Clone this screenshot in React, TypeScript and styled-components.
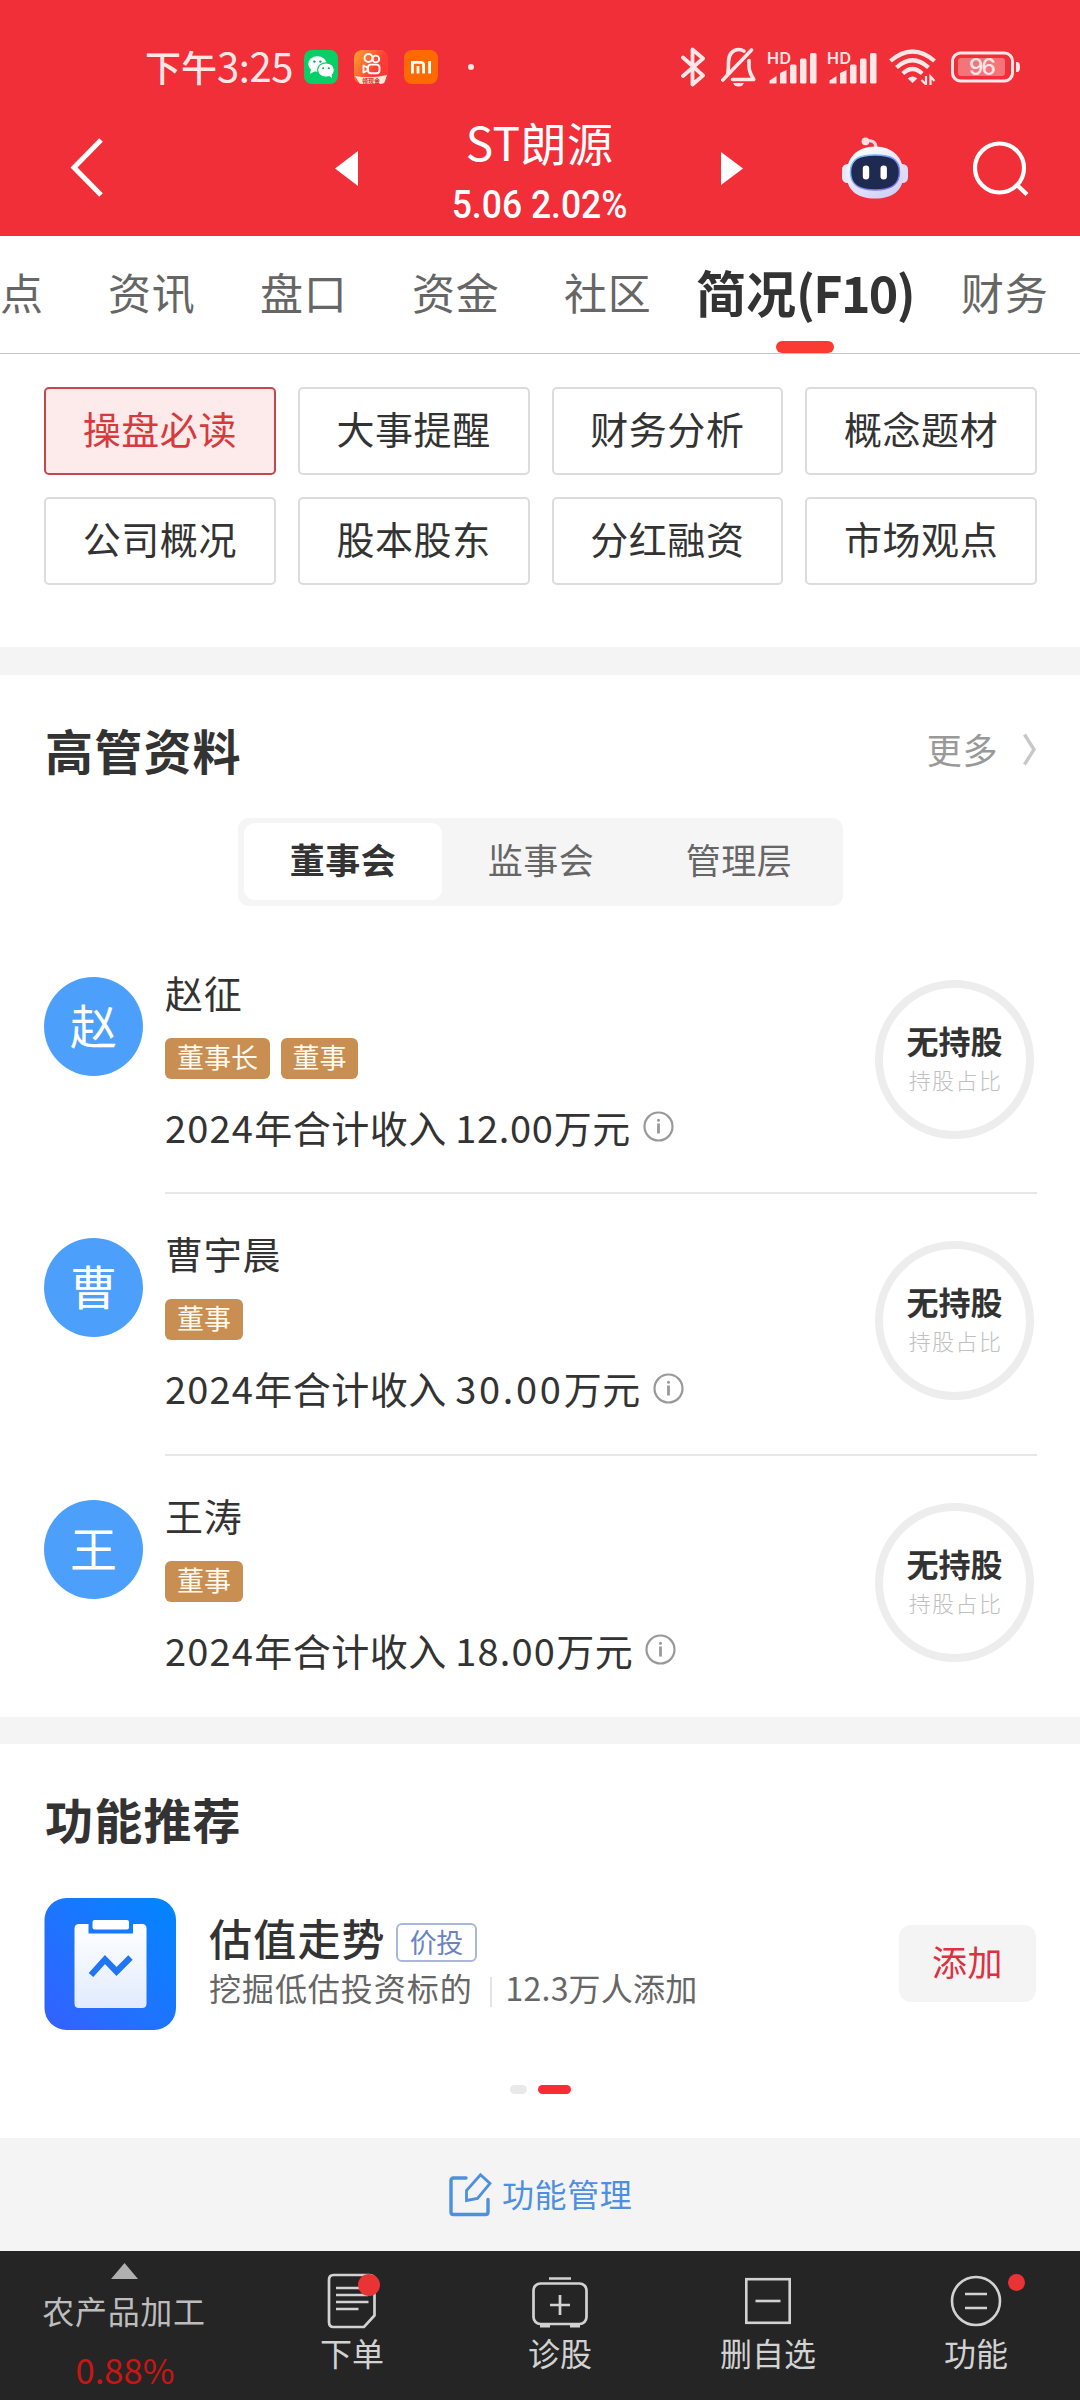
import React from 'react';
import styled, { createGlobalStyle } from 'styled-components';

const GlobalStyle = createGlobalStyle`
  * { box-sizing: border-box; }
  body {
    margin: 0;
    background: #fff;
    font-family: "Noto Sans CJK SC", "Noto Sans", sans-serif;
    color: #333;
  }
  svg { display: block; flex: none; }
`;

const Page = styled.div`
  width: 1080px;
  height: 2400px;
  display: flex;
  flex-direction: column;
  overflow: hidden;
  white-space: nowrap;
  background: #fff;
`;

/* ---------- header ---------- */

const Header = styled.header`
  height: 236px;
  flex: none;
  background: #f12f38;
  color: #fff;
`;

const StatusBar = styled.div`
  height: 100px;
  padding: 34px 59px 0 145px;
  display: flex;
  align-items: center;
`;

const Clock = styled.div`
  width: 159px;
  display: flex;
  align-items: baseline;
  font-size: 36px;
  line-height: 50px;
  font-weight: 500;
  color: #ffe6e7;
  padding-bottom: 3px;
`;

const ClockDigits = styled.span`
  font-size: 40px;
  font-weight: 400;
  letter-spacing: -0.4px;
`;

const AppIcons = styled.div`
  display: flex;
  gap: 16px;
`;

const MoreDot = styled.i`
  width: 6px;
  height: 6px;
  margin-left: 30px;
  border-radius: 50%;
  background: #ffe6e7;
`;

const SystemIcons = styled.div`
  margin-left: auto;
  display: flex;
  align-items: center;
`;

const Spacer = styled.i<{ $w: number }>`
  flex: none;
  width: ${(p) => p.$w}px;
`;

const NavBar = styled.div`
  height: 136px;
  padding: 0 51px 0 70px;
  display: flex;
  align-items: center;
`;

const StockTitle = styled.div`
  flex: 1;
  height: 136px;
  padding-top: 11px;
  display: flex;
  flex-direction: column;
  align-items: center;
`;

const StockName = styled.div`
  font-size: 46px;
  line-height: 60px;
  letter-spacing: 0.4px;
`;

const StockPrice = styled.div`
  margin-top: 14px;
  font-family: Roboto, sans-serif;
  font-size: 39px;
  line-height: 40px;
  font-weight: 500;
  transform: scaleX(0.91);
`;

/* ---------- tabs ---------- */

const Tabs = styled.nav`
  height: 118px;
  flex: none;
  display: flex;
  gap: 64px;
  border-bottom: 1px solid #c4c4c4;
`;

const Tab = styled.div<{ $w: number }>`
  flex: none;
  width: ${(p) => p.$w}px;
  display: flex;
  align-items: center;
  padding-bottom: 8px;
  font-size: 43px;
  letter-spacing: 0.8px;
  color: #666;
`;

const ActiveTab = styled(Tab)`
  position: relative;
  justify-content: center;
  margin-right: 3px;
  font-size: 50px;
  font-weight: 700;
  letter-spacing: 0;
  color: #333;
  &::after {
    content: '';
    position: absolute;
    left: 60px;
    bottom: 0;
    width: 58px;
    height: 12px;
    border-radius: 6px;
    background: #fb3b31;
  }
`;

const TabLatin = styled.span`
  letter-spacing: -1.6px;
`;

/* ---------- section shortcuts ---------- */

const Shortcuts = styled.section`
  flex: none;
  height: 293px;
  padding: 33px 43px 0 44px;
  display: grid;
  grid-template-columns: repeat(4, 1fr);
  grid-auto-rows: 88px;
  gap: 22px;
`;

const Shortcut = styled.button<{ $on?: boolean }>`
  padding: 0 0 6px;
  border: 2px solid ${(p) => (p.$on ? '#c4474b' : '#dcdcdc')};
  border-radius: 5px;
  background: ${(p) => (p.$on ? '#fdeaeb' : '#fff')};
  color: ${(p) => (p.$on ? '#d63a3c' : '#333')};
  font: 400 38px/50px "Noto Sans CJK SC", sans-serif;
  letter-spacing: 0.6px;
`;

const Band = styled.div<{ $h: number }>`
  flex: none;
  height: ${(p) => p.$h}px;
  background: #f4f4f4;
`;

/* ---------- executives ---------- */

const SectionTitle = styled.h2`
  margin: 0 0 0 1px;
  font-size: 48px;
  line-height: 60px;
  font-weight: 700;
  letter-spacing: 1.2px;
`;

const SectionHead = styled.div`
  height: 143px;
  flex: none;
  padding: 5px 44px 0 44px;
  display: flex;
  align-items: center;
  justify-content: space-between;
`;

const More = styled.div`
  display: flex;
  align-items: center;
  font-size: 35px;
  line-height: 50px;
  letter-spacing: 0.6px;
  color: #999;
  gap: 24px;
`;

const Segment = styled.div`
  flex: none;
  width: 605px;
  height: 88px;
  margin: 0 0 26.5px 238px;
  padding: 5px 5px 6px 6px;
  display: flex;
  border-radius: 11px;
  background: #f5f5f5;
`;

const SegmentItem = styled.div<{ $on?: boolean }>`
  width: 198px;
  padding-bottom: 6px;
  display: flex;
  align-items: center;
  justify-content: center;
  border-radius: 11px;
  font-size: 35px;
  letter-spacing: 0.5px;
  background: ${(p) => (p.$on ? '#fff' : 'transparent')};
  font-weight: ${(p) => (p.$on ? 700 : 400)};
  color: ${(p) => (p.$on ? '#333' : '#666')};
`;

const PersonRow = styled.article`
  flex: none;
  height: 261.5px;
  padding: 0 43px 0 44px;
  display: flex;
`;

const Avatar = styled.div`
  width: 99px;
  height: 99px;
  margin: 44px 22px 0 0;
  padding-bottom: 6px;
  display: flex;
  align-items: center;
  justify-content: center;
  border-radius: 50%;
  background: #4ca0fb;
  color: #fff;
  font-size: 47px;
`;

const PersonBody = styled.div<{ $last: boolean }>`
  flex: 1;
  display: flex;
  justify-content: space-between;
  border-bottom: ${(p) => (p.$last ? 'none' : '2px solid #e7e7e7')};
`;

const PersonInfo = styled.div`
  padding-top: 39px;
`;

const PersonName = styled.div`
  font-size: 38px;
  line-height: 40px;
  letter-spacing: 0.8px;
`;

const Tags = styled.div`
  margin-top: 26px;
  display: flex;
  gap: 11px;
`;

const Tag = styled.span`
  height: 41px;
  padding: 0 11.5px 0 12px;
  border-radius: 6px;
  background: #c98e52;
  color: #fff9ee;
  font-size: 27px;
  line-height: 38px;
`;

const Income = styled.div`
  margin-top: 23px;
  display: flex;
  align-items: center;
  font-size: 38px;
  line-height: 50px;
`;

const IncomeYear = styled.span`
  letter-spacing: 1.2px;
`;

const IncomeText = styled.span`
  letter-spacing: 0.5px;
`;

const IncomeAmount = styled.span<{ $w: number }>`
  display: inline-block;
  width: ${(p) => p.$w}px;
  letter-spacing: ${(p) => (p.$w - 95) / 5}px;
`;

const Ring = styled.div`
  width: 159px;
  height: 159px;
  margin: 47px 3px 0 0;
  padding-top: 32px;
  border: 8px solid #ededed;
  border-radius: 50%;
  text-align: center;
`;

const RingTitle = styled.div`
  font-size: 32px;
  line-height: 40px;
  font-weight: 700;
`;

const RingNote = styled.div`
  padding-left: 2px;
  font-size: 22px;
  line-height: 38px;
  font-weight: 300;
  letter-spacing: 1.4px;
  color: #c0c0c0;
`;

/* ---------- recommended feature ---------- */

const Recommend = styled.section`
  flex: none;
  height: 394px;
  padding: 44px 44px 0;
`;

const FeatureCard = styled.div`
  height: 132px;
  margin-top: 50px;
  display: flex;
`;

const FeatureText = styled.div`
  flex: 1;
  padding: 14px 0 0 33px;
`;

const FeatureName = styled.div`
  display: flex;
  align-items: flex-start;
  font-size: 43px;
  line-height: 50px;
  font-weight: 500;
  letter-spacing: 1.2px;
`;

const FeatureTag = styled.span`
  height: 39px;
  width: 81px;
  margin: 11px 0 0 10px;
  border: 2px solid #a9b7dc;
  border-radius: 6px;
  color: #6a84c2;
  font-size: 27px;
  line-height: 33px;
  font-weight: 400;
  letter-spacing: -0.4px;
  text-align: center;
`;

const FeatureDesc = styled.div`
  margin-top: 5px;
  display: flex;
  align-items: center;
  font-size: 32px;
  line-height: 40px;
  letter-spacing: 0.95px;
  color: #666;
`;

const FeatureUsers = styled.span`
  letter-spacing: 0.2px;
`;

const DescDivider = styled.i`
  width: 2px;
  height: 30px;
  margin: 9px 14px 0 17px;
  background: #e4e4e4;
`;

const AddButton = styled.button`
  width: 137px;
  height: 77px;
  margin-top: 27px;
  padding: 0 0 6px;
  border: 0;
  border-radius: 12px;
  background: #f4f4f4;
  color: #dd3040;
  font: 400 35px/50px "Noto Sans CJK SC", sans-serif;
  letter-spacing: 0.5px;
`;

const Pager = styled.div`
  margin-top: 55px;
  padding-left: 466px;
  display: flex;
  gap: 11px;
`;

const PagerDot = styled.i<{ $on?: boolean }>`
  width: ${(p) => (p.$on ? 33 : 17)}px;
  height: 9px;
  border-radius: 4.5px;
  background: ${(p) => (p.$on ? '#fd2a38' : '#e9e9e9')};
`;

const Manage = styled.div`
  flex: none;
  height: 113px;
  display: flex;
  align-items: center;
  padding-left: 449px;
  gap: 10px;
  background: #f4f4f4;
  color: #4e8fe0;
  font-size: 32px;
  letter-spacing: 0.6px;
`;

const ManageLabel = styled.span`
  line-height: 50px;
  padding-bottom: 4px;
`;

/* ---------- bottom bar ---------- */

const BottomBar = styled.footer`
  flex: none;
  height: 149px;
  display: grid;
  grid-template-columns: 248px repeat(4, 208px);
  background: #252525;
  color: #d2d2d2;
`;

const Industry = styled.div`
  padding-top: 12px;
  display: flex;
  flex-direction: column;
  align-items: center;
  font-size: 32px;
  letter-spacing: 0.7px;
  color: #bdbdbd;
`;

const IndustryName = styled.div`
  margin-top: 10px;
  line-height: 42px;
`;

const IndustryChange = styled.div`
  margin: 17px 0 0 2px;
  font-size: 34.5px;
  line-height: 42px;
  letter-spacing: 0;
  color: #ca1515;
`;

const BottomItem = styled.div`
  padding-top: 20px;
  display: flex;
  flex-direction: column;
  align-items: center;
  font-size: 32px;
`;

const BottomIcon = styled.div`
  position: relative;
  height: 60px;
`;

const BottomLabel = styled.div`
  line-height: 42px;
`;

const RedDot = styled.i<{ $size: number; $x: number; $y: number }>`
  position: absolute;
  left: ${(p) => p.$x}px;
  top: ${(p) => p.$y}px;
  width: ${(p) => p.$size}px;
  height: ${(p) => p.$size}px;
  border-radius: 50%;
  background: #ea3335;
`;

/* ---------- icons ---------- */

const WechatIcon = () => (
  <svg width="34" height="34" viewBox="0 0 34 34">
    <rect width="34" height="34" rx="8" fill="#07cf67" />
    <ellipse cx="13.4" cy="14" rx="9.2" ry="7.8" fill="#fff" />
    <path d="M7 19l-1 5 5-3z" fill="#fff" />
    <ellipse cx="22" cy="20" rx="8.4" ry="7.2" fill="#fff" stroke="#07cf67" strokeWidth="1.2" />
    <path d="M24 25l4 3-.6-4.600z" fill="#fff" />
    <circle cx="10.4" cy="11.600" r="1.200" fill="#07a956" />
    <circle cx="16.400" cy="11.600" r="1.200" fill="#07a956" />
    <circle cx="19.200" cy="18.200" r="1" fill="#07a956" />
    <circle cx="24.800" cy="18.200" r="1" fill="#07a956" />
  </svg>
);

const KuaishouIcon = () => (
  <svg width="34" height="34" viewBox="0 0 34 34">
    <defs>
      <linearGradient id="ks" x1="0" y1="0" x2="1" y2="0.6">
        <stop offset="0" stopColor="#ffa62b" />
        <stop offset="0.75" stopColor="#ff3a35" />
      </linearGradient>
      <clipPath id="ksClip"><rect width="34" height="34" rx="8" /></clipPath>
    </defs>
    <g clipPath="url(#ksClip)">
      <rect width="34" height="34" fill="url(#ks)" />
      <g fill="none" stroke="#fff" strokeWidth="1.900">
        <circle cx="14.500" cy="8" r="4" />
        <circle cx="21.800" cy="9" r="3.400" />
        <rect x="14" y="14.600" width="11.500" height="8.600" rx="3" />
        <path d="M13.500 17.500l-4-2v7l4-2z" strokeLinejoin="round" />
      </g>
      <path d="M1 26Q17 29 33 25L30 34H6Z" fill="#fdebd6" />
      <text x="8" y="32.500" fontSize="6" fontWeight="700" fill="#c8332a">领现金</text>
    </g>
  </svg>
);

const MiIcon = () => (
  <svg width="34" height="34" viewBox="0 0 34 34">
    <rect width="34" height="34" rx="8" fill="#ff6a00" />
    <g fill="none" stroke="#fff" strokeWidth="2.800">
      <path d="M8.400 23.500V12.400H17Q19.600 12.400 19.600 15V23.500" />
      <path d="M14 16V23.500M25.600 11V23.500" />
    </g>
  </svg>
);

const tint = '#ffe6e7';

const BluetoothIcon = () => (
  <svg width="24" height="40" viewBox="0 0 24 40" fill="none" stroke={tint} strokeWidth="3.800" strokeLinecap="round" strokeLinejoin="round">
    <path d="M2 10.500L22 28.500L11.500 37.500V2.500L22 11.500L2 29" />
  </svg>
);

const MutedBellIcon = () => (
  <svg width="36" height="40" viewBox="0 0 36 40" fill="none" stroke={tint} strokeWidth="3.600" strokeLinecap="round" strokeLinejoin="round">
    <path d="M1.800 33L30.500 3" />
    <path d="M6.500 27.500C7.500 24 7.500 20 7.500 15C7.500 7 12 2.500 17.500 2.500C19.500 2.500 21.500 3 23 4.200" />
    <path d="M28 13.500V20C28.300 24 29.500 27.500 32.800 32.500H11.500" />
    <path d="M12 36H23Q21.500 39.500 17.500 39.500Q13.500 39.500 12 36Z" fill={tint} stroke="none" />
  </svg>
);

const SignalIcon = () => (
  <svg width="51" height="36" viewBox="0 0 51 36" fill={tint}>
    <text x="0" y="15" fontSize="16" fontWeight="600" fontFamily="Inter, sans-serif" textLength="24">HD</text>
    <path d="M2.500 34.500V31.500L9.500 27V34.500Z" />
    <path d="M13 34.500V24L19.500 21V34.500Z" />
    <rect x="23" y="15.500" width="6.500" height="19" rx="1.500" />
    <rect x="33" y="9.500" width="6.500" height="25" rx="1.500" />
    <rect x="43" y="4" width="6.500" height="30.500" rx="1.500" />
  </svg>
);

const WifiIcon = () => (
  <svg width="48" height="36" viewBox="0 0 48 36" fill="none" stroke={tint} strokeWidth="4.200">
    <path d="M1.500 12Q23.500-7 45.500 12" />
    <path d="M7.500 18.500Q23.500 4 39.500 18.500" />
    <path d="M13.800 24.500Q23.500 15.500 33.200 24.500" />
    <path d="M23.500 34L18.700 29.500Q23.500 25.500 28.300 29.500Z" fill={tint} stroke="none" />
    <path d="M37 27V35.500L32.500 31M41.500 36V27.500L45.500 32" strokeWidth="2.200" />
  </svg>
);

const BatteryIcon = () => (
  <svg width="70" height="32" viewBox="0 0 70 32">
    <rect x="1.500" y="2" width="60" height="28" rx="8" fill="none" stroke={tint} strokeWidth="3" />
    <rect x="7" y="7" width="47" height="18" rx="3" fill="#f5747a" />
    <path d="M65 11H67Q69 12 69 16Q69 20 67 21H65Z" fill={tint} />
    <text x="31.500" y="24.300" fontSize="23" fontWeight="500" fill={tint} textAnchor="middle" fontFamily="Inter, sans-serif" textLength="27">96</text>
  </svg>
);

const BackIcon = () => (
  <svg width="34" height="62" viewBox="0 0 34 62" fill="none" stroke="#fff" strokeWidth="5">
    <path d="M31 3L4 30.500L31 58" />
  </svg>
);

const PrevIcon = () => (
  <svg width="23" height="35" viewBox="0 0 23 35"><path d="M23 0V35L0 17.500Z" fill="#fff" /></svg>
);

const NextIcon = () => (
  <svg width="22" height="33" viewBox="0 0 22 33"><path d="M0 0V33L22 16.500Z" fill="#fff" /></svg>
);

const RobotIcon = () => (
  <svg width="66" height="62" viewBox="0 0 66 62">
    <defs>
      <linearGradient id="shell" x1="0.2" y1="0" x2="0.8" y2="1">
        <stop offset="0" stopColor="#ffffff" />
        <stop offset="1" stopColor="#cdcff5" />
      </linearGradient>
      <linearGradient id="rim" x1="0" y1="0" x2="1" y2="1">
        <stop offset="0" stopColor="#6fd0ff" />
        <stop offset="1" stopColor="#8a5cf6" />
      </linearGradient>
    </defs>
    <path d="M22 4.500Q34 1.500 34 11" fill="none" stroke="#f6d3e0" strokeWidth="3.200" />
    <circle cx="23.500" cy="4.300" r="3.900" fill="#fbdde4" />
    <rect x="0" y="27" width="12" height="19" rx="5.500" fill="#e9e8fb" />
    <rect x="54" y="27" width="12" height="19" rx="5.500" fill="#dcdcf8" />
    <path d="M33 9.500C51 9.500 61.500 21 61.500 37C61.500 54 50 61.500 33 61.500C16 61.500 4.500 54 4.500 37C4.500 21 15 9.500 33 9.500Z" fill="url(#shell)" />
    <path d="M33 18C49 18 57.500 22 57.500 35C57.500 48 49 53 33 53C17 53 8.500 48 8.500 35C8.500 22 17 18 33 18Z" fill="#1e2a50" stroke="url(#rim)" strokeWidth="1.500" />
    <rect x="20.800" y="28.500" width="6.400" height="14" rx="3.200" fill="#fff" />
    <rect x="38.500" y="28.500" width="6.400" height="14" rx="3.200" fill="#fff" />
  </svg>
);

const SearchIcon = () => (
  <svg width="56" height="56" viewBox="0 0 56 56" fill="none" stroke="#fff" strokeWidth="4.200">
    <circle cx="26.500" cy="28" r="24.500" />
    <path d="M44 45L54 54.500" />
  </svg>
);

const MoreChevron = () => (
  <svg width="14" height="34" viewBox="0 0 14 34" fill="none" stroke="#c8c8c8" strokeWidth="3.400">
    <path d="M2.500 2.500L12 17.500L2.500 32.500" />
  </svg>
);

const InfoIcon = () => (
  <svg width="31" height="31" viewBox="0 0 31 31" fill="none" stroke="#999" strokeWidth="2.200">
    <circle cx="15.500" cy="15.500" r="14" />
    <path d="M15.500 12.500V22.500" strokeWidth="2.800" />
    <circle cx="15.500" cy="9.200" r="1.500" fill="#999" stroke="none" />
  </svg>
);

const ValuationIcon = () => (
  <svg width="132" height="132" viewBox="0 0 132 132">
    <defs>
      <linearGradient id="tile" x1="1" y1="0" x2="0" y2="1">
        <stop offset="0" stopColor="#0086ff" />
        <stop offset="0.5" stopColor="#1c75ff" />
        <stop offset="1" stopColor="#3560ff" />
      </linearGradient>
      <linearGradient id="sheet" x1="0" y1="0" x2="0" y2="1">
        <stop offset="0" stopColor="#ffffff" />
        <stop offset="1" stopColor="#e1ebfe" />
      </linearGradient>
    </defs>
    <rect x="0.500" width="131.500" height="132" rx="22" fill="url(#tile)" />
    <path d="M35 26H44.500V35.500H89V26H98Q102.500 26 102.500 30.500V105.500Q102.500 110 98 110H35Q30.500 110 30.500 105.500V30.500Q30.500 26 35 26Z" fill="url(#sheet)" />
    <rect x="48.500" y="22" width="36.500" height="9.500" rx="2" fill="#fff" />
    <path d="M47 77L61 61.500L72.500 73.500L86.500 59.500" fill="none" stroke="#2075f3" strokeWidth="6.200" />
  </svg>
);

const EditIcon = () => (
  <svg width="43" height="45" viewBox="0 0 43 45" fill="none" stroke="#4e8fe0" strokeWidth="3.400" strokeLinecap="round">
    <path d="M17 6H4.500Q2 6 2 8.500V40Q2 42.500 4.500 42.500H36.500Q39 42.500 39 40V27.500" />
    <path d="M31.500 2.800L41 11.500L28.500 26.500L17.500 28.500V18.500Z" strokeWidth="2.800" />
  </svg>
);

const UpArrow = () => (
  <svg width="27" height="16" viewBox="0 0 27 16"><path d="M13.500 0L27 16H0Z" fill="#b0b0b0" /></svg>
);

const OrderIcon = () => (
  <svg width="52" height="60" viewBox="0 0 52 60" fill="none" stroke="#d2d2d2" strokeWidth="2.700">
    <path d="M7.500 4H43.500Q48.500 4 48.500 9V44.500L38 56H7.500Q3 56 3 51V9Q3 4 7.500 4Z" />
    <path d="M10 17H40M10 24H42M10 31H42.500M10 38H32.500" />
  </svg>
);

const DiagnoseIcon = () => (
  <svg width="56" height="60" viewBox="0 0 56 60" fill="none" stroke="#d2d2d2" strokeWidth="2.700">
    <rect x="1.500" y="12.500" width="53" height="40.500" rx="7" />
    <path d="M17 7.500H39M18 34H38M28 24V44" />
    <path d="M8 54.500H18M38 54.500H48" strokeWidth="4" />
  </svg>
);

const RemoveIcon = () => (
  <svg width="46" height="60" viewBox="0 0 46 60" fill="none" stroke="#d2d2d2" strokeWidth="2.600">
    <rect x="1.300" y="8.200" width="43.400" height="43.600" />
    <path d="M10.500 30H35.500" />
  </svg>
);

const MenuIcon = () => (
  <svg width="52" height="60" viewBox="0 0 52 60" fill="none" stroke="#d2d2d2" strokeWidth="2.600">
    <circle cx="26" cy="30" r="24" />
    <path d="M15 23H37M15 37H37" />
  </svg>
);

/* ---------- data ---------- */

const shortcuts = ['操盘必读', '大事提醒', '财务分析', '概念题材', '公司概况', '股本股东', '分红融资', '市场观点'];

const people = [
  { name: '赵征', tags: ['董事长', '董事'], amount: '12.00', width: 98.5 },
  { name: '曹宇晨', tags: ['董事'], amount: '30.00', width: 108.5 },
  { name: '王涛', tags: ['董事'], amount: '18.00', width: 101 },
];

export default function App() {
  return (
    <>
      <GlobalStyle />
      <Page>
        <Header>
          <StatusBar>
            <Clock>
              下午<ClockDigits>3:25</ClockDigits>
            </Clock>
            <AppIcons>
              <WechatIcon />
              <KuaishouIcon />
              <MiIcon />
            </AppIcons>
            <MoreDot />
            <SystemIcons>
              <BluetoothIcon />
              <Spacer $w={16} />
              <MutedBellIcon />
              <Spacer $w={10} />
              <SignalIcon />
              <Spacer $w={9} />
              <SignalIcon />
              <Spacer $w={11} />
              <WifiIcon />
              <Spacer $w={14} />
              <BatteryIcon />
            </SystemIcons>
          </StatusBar>
          <NavBar>
            <BackIcon />
            <Spacer $w={231} />
            <PrevIcon />
            <StockTitle>
              <StockName>ST朗源</StockName>
              <StockPrice>5.06 2.02%</StockPrice>
            </StockTitle>
            <NextIcon />
            <Spacer $w={99} />
            <RobotIcon />
            <Spacer $w={65} />
            <SearchIcon />
          </NavBar>
        </Header>

        <Tabs>
          <Tab $w={44}>点</Tab>
          <Tab $w={88}>资讯</Tab>
          <Tab $w={88}>盘口</Tab>
          <Tab $w={88}>资金</Tab>
          <Tab $w={88}>社区</Tab>
          <ActiveTab $w={178}>
            简况<TabLatin>(F10)</TabLatin>
          </ActiveTab>
          <Tab $w={88}>财务</Tab>
        </Tabs>

        <Shortcuts>
          {shortcuts.map((label, i) => (
            <Shortcut key={label} $on={i === 0}>{label}</Shortcut>
          ))}
        </Shortcuts>

        <Band $h={28} />

        <SectionHead>
          <SectionTitle>高管资料</SectionTitle>
          <More>
            更多
            <MoreChevron />
          </More>
        </SectionHead>
        <Segment>
          <SegmentItem $on>董事会</SegmentItem>
          <SegmentItem>监事会</SegmentItem>
          <SegmentItem>管理层</SegmentItem>
        </Segment>
        {people.map((p, i) => (
          <PersonRow key={p.name}>
            <Avatar>{p.name[0]}</Avatar>
            <PersonBody $last={i === people.length - 1}>
              <PersonInfo>
                <PersonName>{p.name}</PersonName>
                <Tags>
                  {p.tags.map((t) => (
                    <Tag key={t}>{t}</Tag>
                  ))}
                </Tags>
                <Income>
                  <IncomeYear>2024</IncomeYear>
                  <IncomeText>年合计收入</IncomeText>
                  <Spacer $w={8.5} />
                  <IncomeAmount $w={p.width}>{p.amount}</IncomeAmount>
                  <IncomeText>万元</IncomeText>
                  <Spacer $w={12} />
                  <InfoIcon />
                </Income>
              </PersonInfo>
              <Ring>
                <RingTitle>无持股</RingTitle>
                <RingNote>持股占比</RingNote>
              </Ring>
            </PersonBody>
          </PersonRow>
        ))}

        <Band $h={27} />

        <Recommend>
          <SectionTitle>功能推荐</SectionTitle>
          <FeatureCard>
            <ValuationIcon />
            <FeatureText>
              <FeatureName>
                估值走势
                <FeatureTag>价投</FeatureTag>
              </FeatureName>
              <FeatureDesc>
                挖掘低估投资标的
                <DescDivider />
                <FeatureUsers>12.3万人添加</FeatureUsers>
              </FeatureDesc>
            </FeatureText>
            <AddButton>添加</AddButton>
          </FeatureCard>
          <Pager>
            <PagerDot />
            <PagerDot $on />
          </Pager>
        </Recommend>

        <Manage>
          <EditIcon />
          <ManageLabel>功能管理</ManageLabel>
        </Manage>

        <BottomBar>
          <Industry>
            <UpArrow />
            <IndustryName>农产品加工</IndustryName>
            <IndustryChange>0.88%</IndustryChange>
          </Industry>
          <BottomItem>
            <BottomIcon>
              <OrderIcon />
              <RedDot $size={22} $x={32} $y={3} />
            </BottomIcon>
            <BottomLabel>下单</BottomLabel>
          </BottomItem>
          <BottomItem>
            <BottomIcon>
              <DiagnoseIcon />
            </BottomIcon>
            <BottomLabel>诊股</BottomLabel>
          </BottomItem>
          <BottomItem>
            <BottomIcon>
              <RemoveIcon />
            </BottomIcon>
            <BottomLabel>删自选</BottomLabel>
          </BottomItem>
          <BottomItem>
            <BottomIcon>
              <MenuIcon />
              <RedDot $size={17} $x={58} $y={3} />
            </BottomIcon>
            <BottomLabel>功能</BottomLabel>
          </BottomItem>
        </BottomBar>
      </Page>
    </>
  );
}
